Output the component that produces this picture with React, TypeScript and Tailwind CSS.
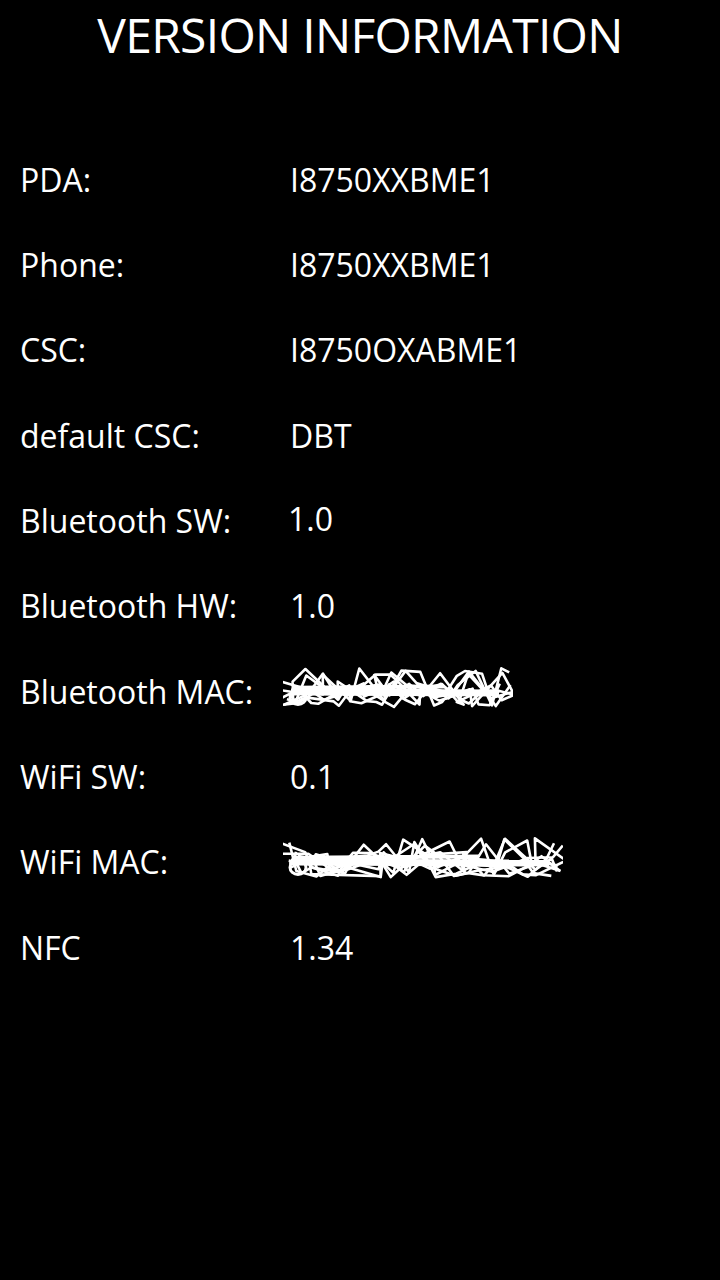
import React from 'react';

type Row = { label: string; value?: string; scribble?: 'bt' | 'wifi'; shift?: boolean };

const ROWS: Row[] = [
  { label: 'PDA:', value: 'I8750XXBME1' },
  { label: 'Phone:', value: 'I8750XXBME1' },
  { label: 'CSC:', value: 'I8750OXABME1' },
  { label: 'default CSC:', value: 'DBT' },
  { label: 'Bluetooth SW:', value: '1.0', shift: true },
  { label: 'Bluetooth HW:', value: '1.0' },
  { label: 'Bluetooth MAC:', scribble: 'bt' },
  { label: 'WiFi SW:', value: '0.1' },
  { label: 'WiFi MAC:', scribble: 'wifi' },
  { label: 'NFC', value: '1.34' },
];

// simple seeded random so the scribble stays the same every render
const makeRand = (seed: number) => () => {
  seed = (seed * 16807) % 2147483647;
  return (seed - 1) / 2147483646;
};

const scribblePath = (w: number, h: number, seed: number, strokes: number) => {
  const rand = makeRand(seed);
  const parts: string[] = [];
  for (let s = 0; s < strokes; s++) {
    let d = '';
    const n = 16;
    for (let i = 0; i <= n; i++) {
      const x = 4 + ((w - 8) * i) / n + (rand() - 0.5) * 22;
      const spike = rand() < 0.12;
      const y = spike ? h * 0.06 + rand() * h * 0.15 : h * 0.3 + rand() * h * 0.48;
      d += `${i === 0 ? 'M' : 'L'}${x.toFixed(1)} ${y.toFixed(1)} `;
    }
    parts.push(d);
  }
  return parts;
};

const Scribble: React.FC<{ kind: 'bt' | 'wifi' }> = ({ kind }) => {
  const w = kind === 'bt' ? 230 : 280;
  const h = 54;
  const paths = scribblePath(w, h, kind === 'bt' ? 11 : 23, kind === 'bt' ? 8 : 9);
  return (
    <svg width={w} height={h} viewBox={`0 0 ${w} ${h}`} className="-ml-[7px]">
      {paths.map((d, i) => (
        <path key={i} d={d} fill="none" stroke="white" strokeWidth={2.6} strokeLinejoin="round" />
      ))}
      <path d={`M8 ${h * 0.5} L${w - 14} ${h * 0.52}`} stroke="white" strokeWidth={7} />
      <path d={`M10 ${h * 0.42} L${w * 0.7} ${h * 0.4}`} stroke="white" strokeWidth={4} />
      <ellipse cx={15} cy={h * 0.6} rx={8} ry={7} fill="none" stroke="white" strokeWidth={3} />
    </svg>
  );
};

export default function App() {
  return (
    <div
      className="w-[720px] h-[1280px] bg-black text-white overflow-hidden"
      style={{ fontFamily: '"Open Sans", "Noto Sans", sans-serif' }}
    >
      <h1 className="h-[70px] flex items-center justify-center text-[48px] leading-none font-normal tracking-[-0.7px]">
        VERSION INFORMATION
      </h1>

      <div className="mt-[67px] flex flex-col">
        {ROWS.map((r) => (
          <div key={r.label} className="h-[85.33px] flex items-center pl-5 text-[32px]">
            <div className="w-[270px]">{r.label}</div>
            {r.scribble ? (
              <Scribble kind={r.scribble} />
            ) : (
              <div className={r.shift ? '-ml-[2px] -mt-[3px]' : ''}>{r.value}</div>
            )}
          </div>
        ))}
      </div>
    </div>
  );
}
